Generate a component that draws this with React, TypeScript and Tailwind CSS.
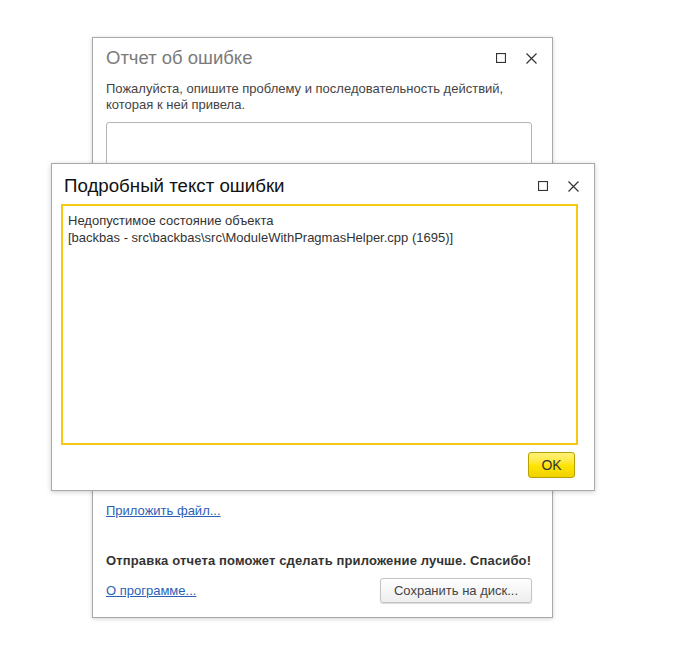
const font = "font-['Liberation_Sans',Arial,sans-serif]";

const WindowControls = () => (
    <div className="flex items-center gap-[20px] text-[#333]">
        <svg width="10" height="10" viewBox="0 0 10 10">
            <rect x="0.5" y="0.5" width="9" height="9" fill="none" stroke="currentColor" strokeWidth="1.2" />
        </svg>
        <svg width="11" height="11" viewBox="0 0 11 11">
            <path d="M0.5 0.5 L10.5 10.5 M10.5 0.5 L0.5 10.5" stroke="currentColor" strokeWidth="1.2" />
        </svg>
    </div>
);

const ErrorReportWindow = () => (
    <div className="absolute left-[92px] top-[37px] w-[461px] h-[581px] bg-white border border-[#a9a9a9] shadow-[0_1px_4px_rgba(0,0,0,0.18)] flex flex-col pl-[13px] pr-[20px] pt-[7px]">
        <div className="flex items-center justify-between h-[26px] mr-[-5px]">
            <span className="text-[18.5px] text-[#7b7b7b]">Отчет об ошибке</span>
            <WindowControls />
        </div>
        <p className="mt-[10px] text-[13px] leading-[16px] text-[#444]">
            Пожалуйста, опишите проблему и последовательность действий,
            <br />
            которая к ней привела.
        </p>
        <div className="mt-[9px] h-[368px] border border-[#b5b5b5] rounded-[3px]" />
        <a className="mt-[13px] self-start text-[13px] leading-[16px] text-[#2b5fb8] underline">Приложить файл...</a>
        <p className="mt-[34px] text-[13px] leading-[16px] font-bold tracking-[0.15px] text-[#333] whitespace-nowrap">
            Отправка отчета поможет сделать приложение лучше. Спасибо!
        </p>
        <div className="mt-[9px] flex items-center justify-between">
            <a className="text-[13px] leading-[16px] text-[#2b5fb8] underline">О программе...</a>
            <button className="h-[25px] w-[152px] rounded-[3px] border border-[#c3c3c3] bg-gradient-to-b from-white to-[#eeeeee] shadow-[0_1px_1px_rgba(0,0,0,0.15)] text-[13px] text-[#444]">
                Сохранить на диск...
            </button>
        </div>
    </div>
);

const ErrorDetailsWindow = () => (
    <div className="absolute left-[51px] top-[163px] w-[544px] h-[328px] bg-white border border-[#a9a9a9] shadow-[0_1px_5px_rgba(0,0,0,0.2)] flex flex-col pl-[9px] pr-[16px] pt-[9px]">
        <div className="flex items-center justify-between h-[26px] pl-[3px] mr-[-1px]">
            <span className="text-[18.7px] text-[#111]">Подробный текст ошибки</span>
            <WindowControls />
        </div>
        <div className="mt-[5px] h-[241px] border-2 border-[#f5c914] px-[5px] pt-[6px] text-[13px] leading-[17px] text-[#333]">
            <div>Недопустимое состояние объекта</div>
            <div>[backbas - src\backbas\src\ModuleWithPragmasHelper.cpp (1695)]</div>
        </div>
        <div className="mt-[7px] flex justify-end pr-[3px]">
            <button className="h-[26px] w-[47px] rounded-[3px] border border-[#b8a200] bg-gradient-to-b from-[#fff176] via-[#ffe500] to-[#efd200] text-[14px] text-[#333]">
                OK
            </button>
        </div>
    </div>
);

export default function App() {
    return (
        <div className={`relative w-[691px] h-[663px] bg-white ${font}`}>
            <ErrorReportWindow />
            <ErrorDetailsWindow />
        </div>
    );
}
